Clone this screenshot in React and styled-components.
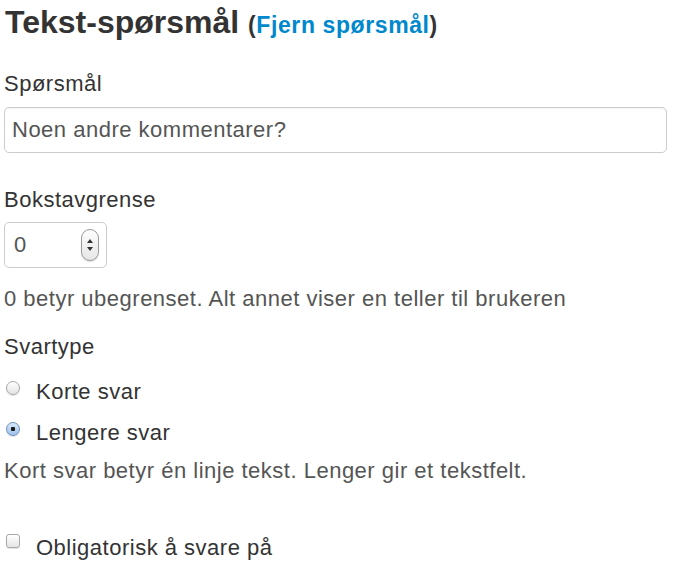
import styled, { createGlobalStyle } from "styled-components";

const GlobalStyle = createGlobalStyle`
  body {
    margin: 0;
    background: #fff;
    font-family: "Liberation Sans", Arial, sans-serif;
    color: #333;
  }
`;

const App = () => {
  return (
    <Form>
      <GlobalStyle />
      <Title>
        Tekst-spørsmål{" "}
        <Remove>
          (<RemoveLink href="#">Fjern spørsmål</RemoveLink>)
        </Remove>
      </Title>

      <Label $mt={30}>Spørsmål</Label>
      <TextInput defaultValue="Noen andre kommentarer?" />

      <Label $mt={33}>Bokstavgrense</Label>
      <NumberBox>
        <NumberValue>0</NumberValue>
        <Stepper>
          <svg width="12" height="26" viewBox="0 0 12 26">
            <path d="M6 7 L9 11 L3 11 Z" fill="#333" />
            <path d="M3 15 L9 15 L6 19 Z" fill="#333" />
          </svg>
        </Stepper>
      </NumberBox>
      <Help $mt={17}>0 betyr ubegrenset. Alt annet viser en teller til brukeren</Help>

      <Label $mt={20}>Svartype</Label>
      <Choice $mt={17}>
        <Radio type="radio" name="svartype" />
        Korte svar
      </Choice>
      <Choice $mt={13}>
        <Radio type="radio" name="svartype" defaultChecked />
        Lengere svar
      </Choice>
      <Help $mt={10}>Kort svar betyr én linje tekst. Lenger gir et tekstfelt.</Help>

      <Choice $mt={49}>
        <Check type="checkbox" />
        Obligatorisk å svare på
      </Choice>
    </Form>
  );
};

const Form = styled.div`
  padding: 0 4px;
  font-size: 22px;
  line-height: 28px;
  letter-spacing: 0.5px;
`;

const Title = styled.h3`
  margin: 4px 0 0 1px;
  font-size: 32px;
  line-height: 36px;
  letter-spacing: 0;
  font-weight: bold;
  color: #333;
`;

const Remove = styled.span`
  font-size: 23px;
  line-height: 1;
  letter-spacing: 0.6px;
`;

const RemoveLink = styled.a`
  color: #0088cc;
  text-decoration: none;
`;

const Label = styled.label`
  display: block;
  margin-top: ${(p) => p.$mt}px;
  color: #333;
`;

const TextInput = styled.input`
  display: block;
  box-sizing: border-box;
  width: 663px;
  height: 46px;
  margin-top: 9px;
  padding: 0 7px;
  border: 1px solid #ccc;
  border-radius: 5px;
  font: inherit;
  letter-spacing: inherit;
  color: #555;
  outline: none;
  box-shadow: inset 0 1px 1px rgba(0, 0, 0, 0.04);
`;

const NumberBox = styled.div`
  display: flex;
  align-items: center;
  justify-content: space-between;
  box-sizing: border-box;
  width: 103px;
  height: 46px;
  margin-top: 8px;
  padding: 0 7px 0 9px;
  border: 1px solid #ccc;
  border-radius: 5px;
  color: #555;
`;

const NumberValue = styled.span`
  color: #555;
`;

const Stepper = styled.span`
  display: flex;
  box-sizing: border-box;
  width: 18px;
  height: 32px;
  align-items: center;
  justify-content: center;
  border: 1px solid #9a9a9a;
  border-radius: 9px;
  background: linear-gradient(#fdfdfd, #e6e6e6);
  box-shadow: 0 1px 1px rgba(0, 0, 0, 0.15);
`;

const Help = styled.p`
  margin: ${(p) => p.$mt}px 0 0;
  color: #555;
`;

const Choice = styled.label`
  display: flex;
  align-items: center;
  margin-top: ${(p) => p.$mt}px;
  color: #333;
`;

const Radio = styled.input`
  appearance: none;
  box-sizing: border-box;
  width: 14px;
  height: 14px;
  margin: -8px 16px 0 2px;
  border: 1px solid #a8a8a8;
  border-radius: 50%;
  background: linear-gradient(#ffffff, #e4e4e4);
  box-shadow: 0 1px 1px rgba(0, 0, 0, 0.12);

  &:checked {
    border-color: #6d8fb8;
    background: radial-gradient(circle, #1a1a1a 0 2px, transparent 2.5px),
      linear-gradient(#d8e8fb, #9fc2ee);
  }
`;

const Check = styled.input`
  appearance: none;
  box-sizing: border-box;
  width: 14px;
  height: 14px;
  margin: -14px 16px 0 2px;
  border: 1px solid #a8a8a8;
  border-radius: 3px;
  background: linear-gradient(#ffffff, #e4e4e4);
  box-shadow: 0 1px 1px rgba(0, 0, 0, 0.12);
`;

export default App;
